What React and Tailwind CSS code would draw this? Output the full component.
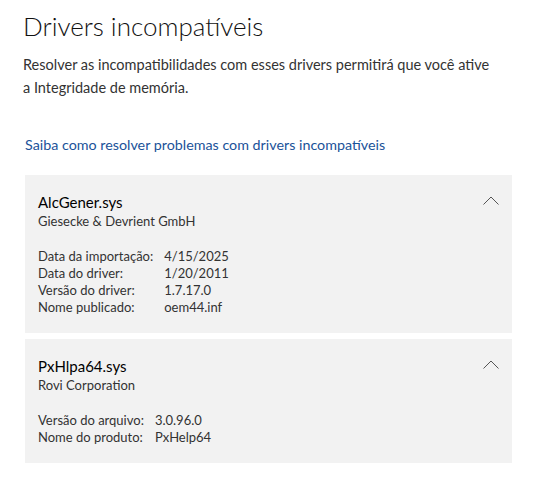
import React from 'react';

const drivers = [
  {
    name: 'AlcGener.sys',
    vendor: 'Giesecke & Devrient GmbH',
    details: [
      ['Data da importação:', '4/15/2025'],
      ['Data do driver:', '1/20/2011'],
      ['Versão do driver:', '1.7.17.0'],
      ['Nome publicado:', 'oem44.inf'],
    ],
  },
  {
    name: 'PxHlpa64.sys',
    vendor: 'Rovi Corporation',
    details: [
      ['Versão do arquivo:', '3.0.96.0'],
      ['Nome do produto:', 'PxHelp64'],
    ],
  },
];

function ChevronUp() {
  return (
    <svg width="16" height="9" viewBox="0 0 16 9" fill="none" className="mt-[4px]">
      <path d="M0.5 8.5 L8 1 L15.5 8.5" stroke="#555" strokeWidth="1" />
    </svg>
  );
}

function DriverCard({ driver }) {
  return (
    <div className="bg-[#f2f2f2] pl-[13px] pr-[13px] pt-[17px] pb-[17px]">
      <div className="flex items-start justify-between">
        <div>
          <p className="text-[15px] leading-[20px] text-black">{driver.name}</p>
          <p className="text-[13px] leading-[18px] text-[#333]">{driver.vendor}</p>
        </div>
        <ChevronUp />
      </div>
      <div className="mt-[18px] grid grid-cols-[auto_1fr] gap-x-[11px] text-[13px] leading-[17px] text-[#333]">
        {driver.details.map(([label, value]) => (
          <React.Fragment key={label}>
            <span>{label}</span>
            <span>{value}</span>
          </React.Fragment>
        ))}
      </div>
    </div>
  );
}

export default function App() {
  return (
    <div className="min-h-[501px] bg-white pl-[23px] pr-[47px] pt-[6px] font-['Lato',sans-serif]">
      <h1 className="text-[26px] leading-[40px] font-light text-[#111]">Drivers incompatíveis</h1>
      <p className="mt-[7px] max-w-[468px] text-[14.5px] leading-[23px] text-[#333]">
        Resolver as incompatibilidades com esses drivers permitirá que você ative a Integridade de memória.
      </p>
      <a href="#" className="mt-[36px] ml-[2px] block text-[14.3px] leading-[20px] text-[#1a5299]">
        Saiba como resolver problemas com drivers incompatíveis
      </a>
      <div className="mt-[20px] ml-[2px] flex flex-col gap-[6px]">
        {drivers.map((d) => (
          <DriverCard key={d.name} driver={d} />
        ))}
      </div>
    </div>
  );
}
